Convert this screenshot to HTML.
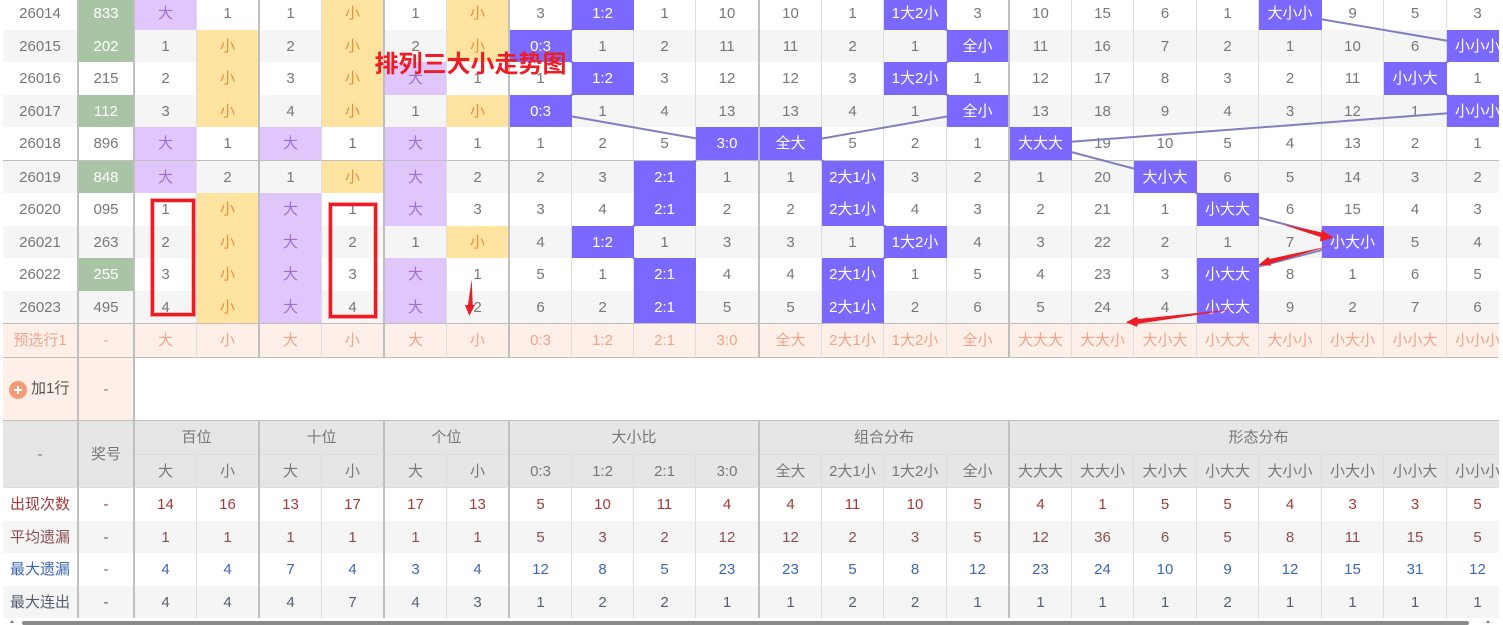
<!DOCTYPE html>
<html lang="zh">
<head>
<meta charset="utf-8">
<title>排列三大小走势图</title>
<style>
html,body{margin:0;padding:0;background:#fff;width:1503px;height:623px;overflow:hidden}
#w{position:absolute;left:0;top:0;width:1499px;height:623px;overflow:hidden}
table{position:absolute;left:3px;top:-3px;width:1506px;table-layout:fixed;border-collapse:separate;border-spacing:0;font:15px/1 "Liberation Sans","Noto Sans CJK SC",sans-serif;color:#777}
td{padding:0;text-align:center;white-space:nowrap;box-sizing:border-box;border-right:1px solid #ddd;overflow:hidden}
tr.d td:nth-child(1),tr.d td:nth-child(2),tr.d td:nth-child(4),tr.d td:nth-child(6),tr.d td:nth-child(8),tr.d td:nth-child(12),tr.d td:nth-child(16){border-right:2px solid #bfbfbf}
tr.e td{background:#f5f5f5}
tr.line td{border-bottom:1px solid #bfbfbf}
tr.d td.a{background:#e0c6fb;color:#a26fd0}
tr.d td.s{background:#ffe3a1;color:#e9913a}
tr.d td.g{background:#a9c3a5;color:#fff}
tr.d td.p{background:#7b68ff;color:#fff;position:relative;z-index:2}
tr.d td.p:not(:nth-child(12)):not(:nth-child(16)){border-right-color:transparent}
tr.y td{background:#feefe8;color:#f0a488}
td.t{border-right:2px solid #bfbfbf !important}
tr.h td{background:#e6e6e6;color:#777}
tr.h1 td{border-bottom:1px solid #ddd}
tr.h2 td{border-bottom:1px solid #ddd}
tr.c1 td{color:#a33a3a}
tr.c2 td{color:#8a5050}
tr.c3 td{color:#3f66b0}
tr.c4 td{color:#555e70}
#lines{position:absolute;left:0;top:0;z-index:1}
#red{position:absolute;left:0;top:0;z-index:3}
#title{position:absolute;left:374.5px;top:51px;z-index:4;font:bold 24px/28px "Liberation Sans","Noto Sans CJK SC",sans-serif;color:#ee1c25;white-space:nowrap}
.box{position:absolute;z-index:3;border:3px solid #ed1c24;box-shadow:0 0 0 1px rgba(237,28,36,.4),inset 0 0 0 1px rgba(237,28,36,.25);box-sizing:border-box}
#plus{display:inline-block;width:18px;height:18px;border-radius:50%;background:#f29b76;position:relative;vertical-align:middle;margin-right:4px;top:1px}
#plus:before{content:"";position:absolute;left:5px;top:8px;width:8px;height:2px;background:#fff}
#plus:after{content:"";position:absolute;left:8px;top:5px;width:2px;height:8px;background:#fff}
#bar{position:absolute;left:22px;top:621px;width:1447px;height:4px;border-radius:2px;background:#8a8a8a}
.tri{position:absolute;top:620px;width:0;height:0;border-left:2.5px solid transparent;border-right:2.5px solid transparent;border-bottom:3px solid #777}
</style>
</head>
<body>
<div id="w">
<table>
<colgroup><col style="width:76px"><col style="width:56px"><col style="width:62px"><col style="width:63px"><col style="width:62px"><col style="width:63px"><col style="width:62px"><col style="width:63px"><col style="width:62px"><col style="width:62px"><col style="width:62px"><col style="width:64px"><col style="width:62px"><col style="width:62px"><col style="width:63px"><col style="width:63px"><col style="width:62px"><col style="width:62px"><col style="width:63px"><col style="width:62px"><col style="width:63px"><col style="width:62px"><col style="width:63px"><col style="width:62px"></colgroup>
<tr class="d" style="height:33px"><td>26014</td><td class="g">833</td><td class="a">大</td><td>1</td><td>1</td><td class="s">小</td><td>1</td><td class="s">小</td><td>3</td><td class="p">1:2</td><td>1</td><td>10</td><td>10</td><td>1</td><td class="p">1大2小</td><td>3</td><td>10</td><td>15</td><td>6</td><td>1</td><td class="p">大小小</td><td>9</td><td>5</td><td>3</td></tr>
<tr class="d e" style="height:32px"><td>26015</td><td class="g">202</td><td>1</td><td class="s">小</td><td>2</td><td class="s">小</td><td>2</td><td class="s">小</td><td class="p">0:3</td><td>1</td><td>2</td><td>11</td><td>11</td><td>2</td><td>1</td><td class="p">全小</td><td>11</td><td>16</td><td>7</td><td>2</td><td>1</td><td>10</td><td>6</td><td class="p">小小小</td></tr>
<tr class="d" style="height:33px"><td>26016</td><td>215</td><td>2</td><td class="s">小</td><td>3</td><td class="s">小</td><td class="a">大</td><td>1</td><td>1</td><td class="p">1:2</td><td>3</td><td>12</td><td>12</td><td>3</td><td class="p">1大2小</td><td>1</td><td>12</td><td>17</td><td>8</td><td>3</td><td>2</td><td>11</td><td class="p">小小大</td><td>1</td></tr>
<tr class="d e" style="height:32px"><td>26017</td><td class="g">112</td><td>3</td><td class="s">小</td><td>4</td><td class="s">小</td><td>1</td><td class="s">小</td><td class="p">0:3</td><td>1</td><td>4</td><td>13</td><td>13</td><td>4</td><td>1</td><td class="p">全小</td><td>13</td><td>18</td><td>9</td><td>4</td><td>3</td><td>12</td><td>1</td><td class="p">小小小</td></tr>
<tr class="d line" style="height:34px"><td>26018</td><td>896</td><td class="a">大</td><td>1</td><td class="a">大</td><td>1</td><td class="a">大</td><td>1</td><td>1</td><td>2</td><td>5</td><td class="p">3:0</td><td class="p">全大</td><td>5</td><td>2</td><td>1</td><td class="p">大大大</td><td>19</td><td>10</td><td>5</td><td>4</td><td>13</td><td>2</td><td>1</td></tr>
<tr class="d e" style="height:32px"><td>26019</td><td class="g">848</td><td class="a">大</td><td>2</td><td>1</td><td class="s">小</td><td class="a">大</td><td>2</td><td>2</td><td>3</td><td class="p">2:1</td><td>1</td><td>1</td><td class="p">2大1小</td><td>3</td><td>2</td><td>1</td><td>20</td><td class="p">大小大</td><td>6</td><td>5</td><td>14</td><td>3</td><td>2</td></tr>
<tr class="d" style="height:33px"><td>26020</td><td>095</td><td>1</td><td class="s">小</td><td class="a">大</td><td>1</td><td class="a">大</td><td>3</td><td>3</td><td>4</td><td class="p">2:1</td><td>2</td><td>2</td><td class="p">2大1小</td><td>4</td><td>3</td><td>2</td><td>21</td><td>1</td><td class="p">小大大</td><td>6</td><td>15</td><td>4</td><td>3</td></tr>
<tr class="d e" style="height:32px"><td>26021</td><td>263</td><td>2</td><td class="s">小</td><td class="a">大</td><td>2</td><td>1</td><td class="s">小</td><td>4</td><td class="p">1:2</td><td>1</td><td>3</td><td>3</td><td>1</td><td class="p">1大2小</td><td>4</td><td>3</td><td>22</td><td>2</td><td>1</td><td>7</td><td class="p">小大小</td><td>5</td><td>4</td></tr>
<tr class="d" style="height:33px"><td>26022</td><td class="g">255</td><td>3</td><td class="s">小</td><td class="a">大</td><td>3</td><td class="a">大</td><td>1</td><td>5</td><td>1</td><td class="p">2:1</td><td>4</td><td>4</td><td class="p">2大1小</td><td>1</td><td>5</td><td>4</td><td>23</td><td>3</td><td class="p">小大大</td><td>8</td><td>1</td><td>6</td><td>5</td></tr>
<tr class="d e line" style="height:33px"><td>26023</td><td>495</td><td>4</td><td class="s">小</td><td class="a">大</td><td>4</td><td class="a">大</td><td>2</td><td>6</td><td>2</td><td class="p">2:1</td><td>5</td><td>5</td><td class="p">2大1小</td><td>2</td><td>6</td><td>5</td><td>24</td><td>4</td><td class="p">小大大</td><td>9</td><td>2</td><td>7</td><td>6</td></tr>
<tr class="d y line" style="height:34px"><td>预选行1</td><td>-</td><td>大</td><td>小</td><td>大</td><td>小</td><td>大</td><td>小</td><td>0:3</td><td>1:2</td><td>2:1</td><td>3:0</td><td>全大</td><td>2大1小</td><td>1大2小</td><td>全小</td><td>大大大</td><td>大大小</td><td>大小大</td><td>小大大</td><td>大小小</td><td>小大小</td><td>小小大</td><td>小小小</td></tr>
<tr class="line" style="height:63px"><td class="t" style="background:#feefe8;color:#555;text-align:left;padding-left:6px"><span id="plus"></span>加1行</td><td class="t" style="background:#feefe8">-</td><td colspan="22" style="background:#fff;border-right:0"></td></tr>
<tr class="h h1" style="height:34px"><td class="t" rowspan="2" style="border-bottom:1px solid #ddd">-</td><td class="t" rowspan="2" style="border-bottom:1px solid #ddd">奖号</td><td class="t" colspan="2">百位</td><td class="t" colspan="2">十位</td><td class="t" colspan="2">个位</td><td class="t" colspan="4">大小比</td><td class="t" colspan="4">组合分布</td><td class="t" colspan="8">形态分布</td></tr>
<tr class="h h2" style="height:33px"><td>大</td><td class="t">小</td><td>大</td><td class="t">小</td><td>大</td><td class="t">小</td><td>0:3</td><td>1:2</td><td>2:1</td><td class="t">3:0</td><td>全大</td><td>2大1小</td><td>1大2小</td><td class="t">全小</td><td>大大大</td><td>大大小</td><td>大小大</td><td>小大大</td><td>大小小</td><td>小大小</td><td>小小大</td><td>小小小</td></tr>
<tr class="d c1" style="height:33px"><td>出现次数</td><td>-</td><td>14</td><td>16</td><td>13</td><td>17</td><td>17</td><td>13</td><td>5</td><td>10</td><td>11</td><td>4</td><td>4</td><td>11</td><td>10</td><td>5</td><td>4</td><td>1</td><td>5</td><td>5</td><td>4</td><td>3</td><td>3</td><td>5</td></tr>
<tr class="d e c2" style="height:32px"><td>平均遗漏</td><td>-</td><td>1</td><td>1</td><td>1</td><td>1</td><td>1</td><td>1</td><td>5</td><td>3</td><td>2</td><td>12</td><td>12</td><td>2</td><td>3</td><td>5</td><td>12</td><td>36</td><td>6</td><td>5</td><td>8</td><td>11</td><td>15</td><td>5</td></tr>
<tr class="d c3" style="height:33px"><td>最大遗漏</td><td>-</td><td>4</td><td>4</td><td>7</td><td>4</td><td>3</td><td>4</td><td>12</td><td>8</td><td>5</td><td>23</td><td>23</td><td>5</td><td>8</td><td>12</td><td>23</td><td>24</td><td>10</td><td>9</td><td>12</td><td>15</td><td>31</td><td>12</td></tr>
<tr class="d e c4" style="height:32px"><td>最大连出</td><td>-</td><td>4</td><td>4</td><td>4</td><td>7</td><td>4</td><td>3</td><td>1</td><td>2</td><td>2</td><td>1</td><td>1</td><td>2</td><td>2</td><td>1</td><td>1</td><td>1</td><td>1</td><td>2</td><td>1</td><td>1</td><td>1</td><td>1</td></tr>
</table>
<svg id="lines" width="1499" height="623" viewBox="0 0 1499 623" fill="none" stroke="#8080c0" stroke-width="2">
<polyline points="603,14 541,46 603,78.5 541,111 728,144 665,177 665,209.5 603,242 665,274.5 665,307.5"/>
<polyline points="915.5,14 978,46 915.5,78.5 978,111 791,144 853,177 853,209.5 915.5,242 853,274.5 853,307.5"/>
<polyline points="1290.5,14 1478,46 1415.5,78.5 1478,111 1041,144 1165.5,177 1228,209.5 1353,242 1228,274.5 1228,307.5"/>
</svg>
<div class="box" style="left:151px;top:199px;width:44px;height:117px"></div>
<div class="box" style="left:329px;top:203px;width:48px;height:115px"></div>
<svg id="red" width="1499" height="623" viewBox="0 0 1499 623" fill="#ed1c24">
<polygon points="471.7,279.3 472.7,305 475,305 469.3,315.7 465,305 468,305"/>
<polygon points="1281.7,224.3 1322,232.5 1321,229.5 1333.5,237.7 1320,241.5 1320.5,237"/>
<polygon points="1330.7,245.7 1269.3,259 1268.3,256.7 1258.3,265 1271.7,265.7 1270,263.7"/>
<polygon points="1236.7,309 1138.3,319 1136.7,316.7 1126,322.3 1136.7,326.7 1138.3,323.7"/>
</svg>
<div id="title">排列三大小走势图</div>
</div>
<div id="bar"></div>
<div class="tri" style="left:10px"></div>
<div class="tri" style="left:1486px"></div>
</body>
</html>
